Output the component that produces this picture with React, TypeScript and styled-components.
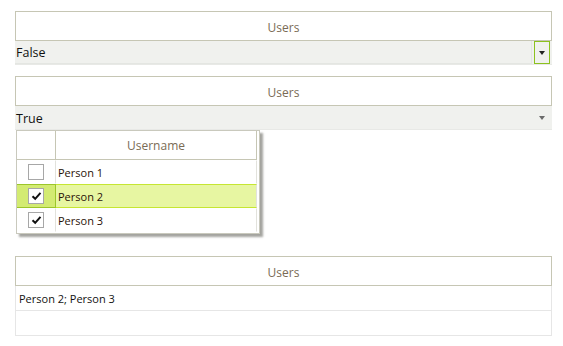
import React from "react";
import styled, { createGlobalStyle } from "styled-components";

const GlobalStyle = createGlobalStyle`
  html, body {
    margin: 0;
    padding: 0;
    background: #ffffff;
  }
  body {
    font-family: "Open Sans", "Noto Sans", sans-serif;
    color: #1e1e1e;
  }
`;

const Page = styled.div`
  padding: 11px 12px 0 15px;
  width: 536px;
`;

const Section = styled.div<{ $gap?: number }>`
  position: relative;
  width: 537px;
  margin-top: ${(p) => p.$gap ?? 0}px;
`;

const Header = styled.div`
  height: 28px;
  border: 1px solid #c6c6b4;
  line-height: 31px;
  overflow: hidden;
  text-align: center;
  font-size: 12px;
  color: #7a6b55;
`;

const ComboRow = styled.div`
  display: flex;
  align-items: center;
  height: 23px;
  background: #f0f1ee;
  border-bottom: 1px solid #e8e9e6;
`;

const ComboText = styled.div<{ $focused?: boolean }>`
  flex: 1;
  height: 100%;
  display: flex;
  align-items: center;
  padding: 1px 0 0 1px;
  font-size: 12.5px;
  color: #111;
  box-sizing: border-box;
  border-right: ${(p) => (p.$focused ? "1px solid #e4e6e2" : "none")};
  border-bottom: ${(p) => (p.$focused ? "1px solid #e4e6e2" : "none")};
`;

const DropButton = styled.div<{ $focused?: boolean }>`
  width: 14px;
  height: 21px;
  margin: 0 2px 0 2px;
  border: 1px solid ${(p) => (p.$focused ? "#8cc11f" : "transparent")};
  display: flex;
  align-items: center;
  justify-content: center;
  align-self: flex-start;
`;

const Arrow = styled.div<{ $dim?: boolean }>`
  width: 0;
  height: 0;
  border-left: 3px solid transparent;
  border-right: 3px solid transparent;
  border-top: 4px solid ${(p) => (p.$dim ? "#6a6a6a" : "#222")};
`;

const Popup = styled.div`
  position: absolute;
  top: 100%;
  left: 1px;
  width: 240px;
  border: 1px solid #c9c9bd;
  padding: 0 2px 1px 0;
  background: #ffffff;
  box-shadow: 3px 3px 2px rgba(90, 90, 80, 0.55);
  z-index: 2;
`;

const Grid = styled.div`
  display: grid;
  grid-template-columns: 39px 1fr;
`;

const GridHead = styled.div`
  height: 28px;
  line-height: 30px;
  overflow: hidden;
  text-align: center;
  font-size: 12px;
  color: #7a6b55;
  border-bottom: 1px solid #c6c6b4;
  border-right: 1px solid #c6c6b4;
`;

const CheckCell = styled.div<{ $selected?: boolean }>`
  height: 24px;
  display: flex;
  align-items: center;
  justify-content: center;
  box-sizing: border-box;
  border-right: 1px solid ${(p) => (p.$selected ? "#9cc62a" : "#e2e2dc")};
  border-top: 1px solid ${(p) => (p.$selected ? "#9cc62a" : "transparent")};
  border-bottom: 1px solid ${(p) => (p.$selected ? "#9cc62a" : "transparent")};
  background: ${(p) => (p.$selected ? "#d3eb72" : "#ffffff")};
`;

const NameCell = styled.div<{ $selected?: boolean }>`
  height: 24px;
  display: flex;
  align-items: center;
  padding-left: 2px;
  box-sizing: border-box;
  font-size: 11px;
  color: #2a1208;
  border-right: 1px solid #e2e2dc;
  border-top: 1px solid ${(p) => (p.$selected ? "#c6e632" : "transparent")};
  border-bottom: 1px solid ${(p) => (p.$selected ? "#c6e632" : "transparent")};
  background: ${(p) => (p.$selected ? "#e7f6a2" : "#ffffff")};
`;

const Box = styled.div`
  width: 14px;
  height: 14px;
  border: 1px solid #a7a7a7;
  background: #ffffff;
  display: flex;
  align-items: center;
  justify-content: center;
`;

const ResultRow = styled.div`
  height: 24px;
  display: flex;
  align-items: center;
  padding-left: 3px;
  font-size: 11px;
  color: #111;
  border: 1px solid #e6e6e6;
  border-top: none;
`;

function Check() {
  return (
    <svg width="11" height="10" viewBox="0 0 11 10">
      <path d="M1.5 5.2 L4.2 7.8 L9.5 1.8" fill="none" stroke="#111" strokeWidth="2" />
    </svg>
  );
}

const people = [
  { name: "Person 1", checked: false, selected: false },
  { name: "Person 2", checked: true, selected: true },
  { name: "Person 3", checked: true, selected: false },
];

export default function App() {
  return (
    <>
      <GlobalStyle />
      <Page>
        <Section>
          <Header>Users</Header>
          <ComboRow>
            <ComboText $focused>False</ComboText>
            <DropButton $focused>
              <Arrow />
            </DropButton>
          </ComboRow>
        </Section>

        <Section $gap={11}>
          <Header>Users</Header>
          <ComboRow>
            <ComboText>True</ComboText>
            <DropButton>
              <Arrow $dim />
            </DropButton>
          </ComboRow>
          <Popup>
            <Grid>
              <GridHead />
              <GridHead>Username</GridHead>
              {people.map((p) => (
                <React.Fragment key={p.name}>
                  <CheckCell $selected={p.selected}>
                    <Box>{p.checked && <Check />}</Box>
                  </CheckCell>
                  <NameCell $selected={p.selected}>{p.name}</NameCell>
                </React.Fragment>
              ))}
            </Grid>
          </Popup>
        </Section>

        <Section $gap={126}>
          <Header>Users</Header>
          <ResultRow>Person 2; Person 3</ResultRow>
          <ResultRow />
        </Section>
      </Page>
    </>
  );
}
